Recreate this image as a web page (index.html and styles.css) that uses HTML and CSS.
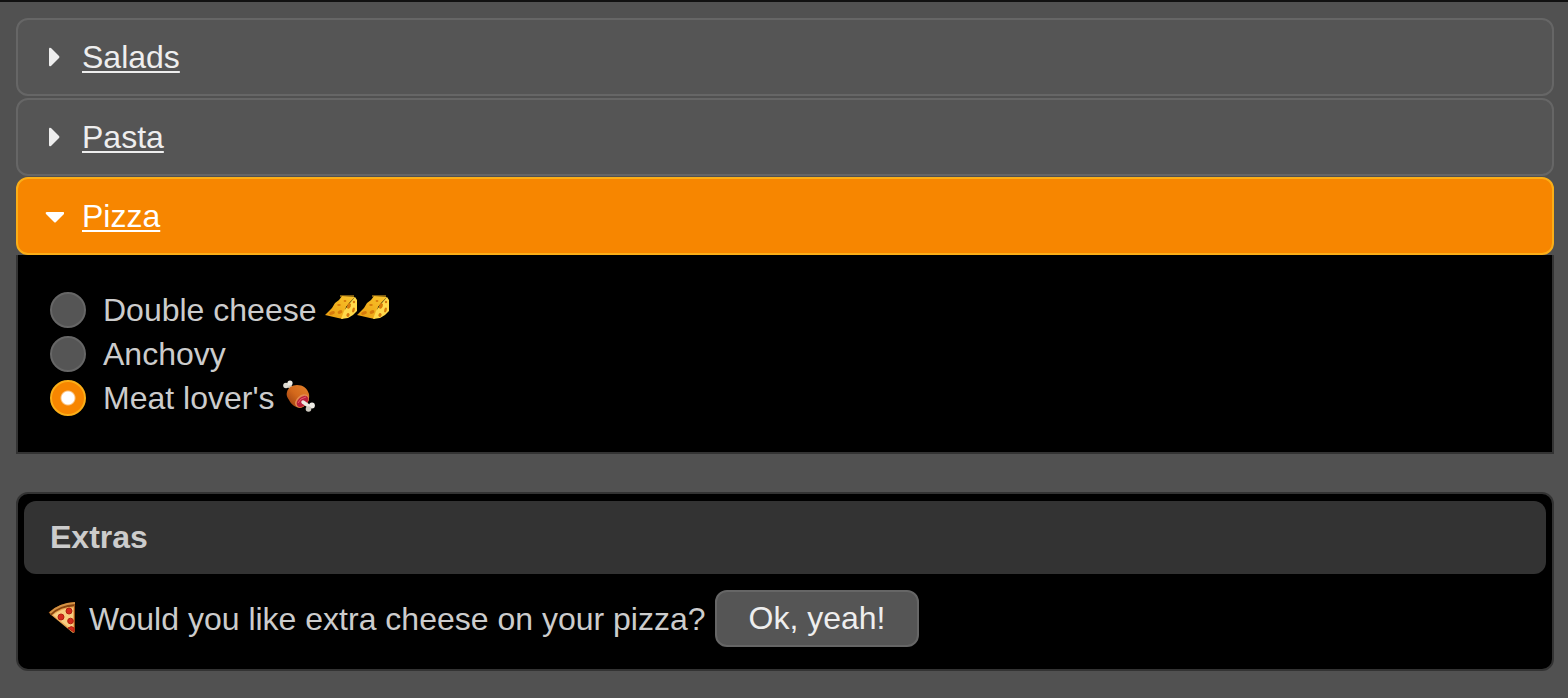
FILE: index.html
```html
<!DOCTYPE html>
<html lang="en">
<head>
<meta charset="utf-8">
<meta name="viewport" content="width=device-width, initial-scale=1">
<title>Pizza order</title>
<link rel="stylesheet" href="styles.css">
</head>
<body>
<svg class="defs" aria-hidden="true">
  <defs>
    <linearGradient id="cheeseSide" x1="0" y1="1" x2="1" y2="0"><stop offset="0" stop-color="#e99c10"/><stop offset="1" stop-color="#fbc62c"/></linearGradient>
    <linearGradient id="meatSkin" x1="0" y1="1" x2="1" y2="0"><stop offset="0" stop-color="#8f360c"/><stop offset=".5" stop-color="#d3681c"/><stop offset="1" stop-color="#e2822a"/></linearGradient>
    <symbol id="cheese" viewBox="0 0 32 32">
      <path fill="url(#cheeseSide)" d="M0 23L7 16 10 11 14 8 17 4 30 5 25 10 21 15 18 27 13 26z"/>
      <path fill="#ffd94a" d="M30 5L32 8 32 19 28 23 23 26 16 27 19 19 24 12z"/>
      <path fill="none" stroke="#f6b421" d="M15 4h14"/>
      <g fill="#d77a0b"><ellipse cx="7" cy="21" rx="3" ry="1.700" transform="rotate(-20 7 21)"/><ellipse cx="15" cy="20" rx="2.500" ry="1.700" transform="rotate(-25 15 20)"/><ellipse cx="24" cy="14" rx="1.800" ry="2.800" transform="rotate(20 24 14)"/><ellipse cx="28.500" cy="18" rx="1.300" ry="2.500" transform="rotate(15 28.500 18)"/><ellipse cx="23" cy="23" rx="1.500" ry="2" transform="rotate(25 23 23)"/><circle cx="29" cy="10" r="1.200"/><ellipse cx="14" cy="13" rx="1.800" ry="1.100"/><ellipse cx="20" cy="9" rx="1.400" ry="1"/></g>
    </symbol>
    <symbol id="meat" viewBox="0 0 32 32">
      <path stroke="#c9c5bb" stroke-width="4" d="M4 4l7 6"/>
      <circle cx="3" cy="5.500" r="2.800" fill="#dedbd2"/><circle cx="7" cy="3" r="2.600" fill="#eeebe3"/>
      <path fill="url(#meatSkin)" d="M4 12C5 8 9 5 14 5 20 5 24 8 26 14 27 20 24 26 18 28 12 28 8 24 6 20 4 17 3 15 4 12z"/>
      <ellipse cx="19" cy="21" rx="8" ry="5.500" transform="rotate(-42 19 21)" fill="#e28a50"/>
      <ellipse cx="19.500" cy="21.500" rx="6.800" ry="4.500" transform="rotate(-42 19.500 21.500)" fill="#b91f3a"/>
      <path fill="none" stroke="#e65b6c" d="M15 23q2-5 8-6"/>
      <path stroke="#ece9e2" stroke-width="3.500" stroke-linecap="round" d="M20 22l7 5"/>
      <circle cx="29" cy="25.500" r="2.900" fill="#efede7"/><circle cx="25.500" cy="29" r="2.800" fill="#cfcac0"/>
    </symbol>
    <symbol id="pizza" viewBox="0 0 32 32">
      <path fill="#e9a551" d="M2 13Q12 5 27 5L27 31 25 32z"/>
      <path fill="#f7cd80" d="M5 14Q14 7 25 7L25 30z"/>
      <path fill="none" stroke="#87430f" stroke-width="4" d="M2 13Q11 4 27 3"/>
      <path fill="none" stroke="#d39345" stroke-width="2" d="M2 12Q11 3 27 2"/>
      <path fill="none" stroke="#9e5318" d="M26.500 3V31"/>
      <g fill="#d42a1c" stroke="#b2200f"><circle cx="13" cy="16" r="3"/><circle cx="21" cy="10" r="3"/><circle cx="22.500" cy="20" r="2.800"/><path d="M20 27q4-3 6 0v4z"/></g>
    </symbol>
  </defs>
</svg>
<main class="page">
  <section class="accordion">
    <h3 class="header"><svg class="arrow" viewBox="0 0 20 20" aria-hidden="true"><path d="M5 2q0-2 2-1l8 8q1 1 0 2l-8 8q-2 1-2-1z"/></svg><a href="#salads">Salads</a></h3>
    <h3 class="header"><svg class="arrow" viewBox="0 0 20 20" aria-hidden="true"><path d="M5 2q0-2 2-1l8 8q1 1 0 2l-8 8q-2 1-2-1z"/></svg><a href="#pasta">Pasta</a></h3>
    <h3 class="header active"><svg class="arrow" viewBox="0 0 20 20" aria-hidden="true"><path d="M3 6h16q2 0 1 2l-8 8q-1 1-2 0L2 8q-1-2 1-2z"/></svg><a href="#pizza-panel">Pizza</a></h3>
    <div class="panel" id="pizza-panel">
      <label class="option"><input class="radio" type="radio" name="pizza"><span>Double cheese <svg class="emoji" role="img" aria-label="cheese"><use href="#cheese"/></svg><svg class="emoji" role="img" aria-label="cheese"><use href="#cheese"/></svg></span></label>
      <label class="option"><input class="radio" type="radio" name="pizza"><span>Anchovy</span></label>
      <label class="option"><input class="radio" type="radio" name="pizza" checked><span>Meat lover's <svg class="emoji" role="img" aria-label="meat on bone"><use href="#meat"/></svg></span></label>
    </div>
  </section>
  <section class="dialog">
    <h2 class="titlebar">Extras</h2>
    <div class="content">
      <span><svg class="emoji" role="img" aria-label="pizza"><use href="#pizza"/></svg> Would you like extra cheese on your pizza?</span>
      <button class="button" type="button">Ok, yeah!</button>
    </div>
  </section>
</main>
</body>
</html>
```
FILE: styles.css
```css
* { box-sizing: border-box; }

body {
  margin: 0;
  background: #515151;
  color: #ccc;
  font-family: "Liberation Sans", Arial, sans-serif;
  font-size: 32px;
  line-height: 44px;
}

.defs { position: absolute; width: 0; height: 0; }

.page {
  display: flex;
  flex-direction: column;
  gap: 38px;
  min-height: 100vh;
  padding: 16px 14px 26px 16px;
  border-top: 2px solid #111;
}

.header {
  display: flex;
  align-items: center;
  gap: 18px;
  margin: 0 0 2px;
  padding: 15px 26px;
  border: 2px solid #666;
  border-radius: 12px;
  background: #555;
  color: #eee;
  font-size: 32px;
  font-weight: 400;
}

.header a {
  color: inherit;
  text-decoration-thickness: 2px;
  text-underline-offset: 3px;
}

.arrow { width: 20px; height: 20px; fill: currentColor; }

.header.active {
  margin: -1px 0 0;
  border-color: #fbae17;
  background: #f78600;
  color: #fff;
}

.panel {
  padding: 33px 32px 32px;
  border: 2px solid #333;
  border-top: 0;
  background: #000;
}

.option {
  display: flex;
  align-items: center;
  gap: 17px;
}

.radio {
  appearance: none;
  width: 36px;
  height: 36px;
  margin: 0;
  border: 2px solid #666;
  border-radius: 50%;
  background: #555;
}

.radio:checked {
  border-color: #fbae17;
  background: radial-gradient(circle, #fff 6px, #f78600 8px);
}

.emoji { width: 32px; height: 32px; vertical-align: -3px; }

.dialog {
  padding: 7px 6px 6px;
  border: 2px solid #333;
  border-radius: 12px;
  background: #000;
}

.titlebar {
  margin: 0;
  padding: 14px 26px 15px;
  border-radius: 12px;
  background: #333;
  font-size: 32px;
  font-weight: 700;
}

.content {
  display: flex;
  align-items: center;
  gap: 9px;
  padding: 16px 24px;
}

.button {
  padding: 4px 32px 5px;
  border: 2px solid #666;
  border-radius: 12px;
  background: #555;
  color: #eee;
  font: inherit;
}
```
